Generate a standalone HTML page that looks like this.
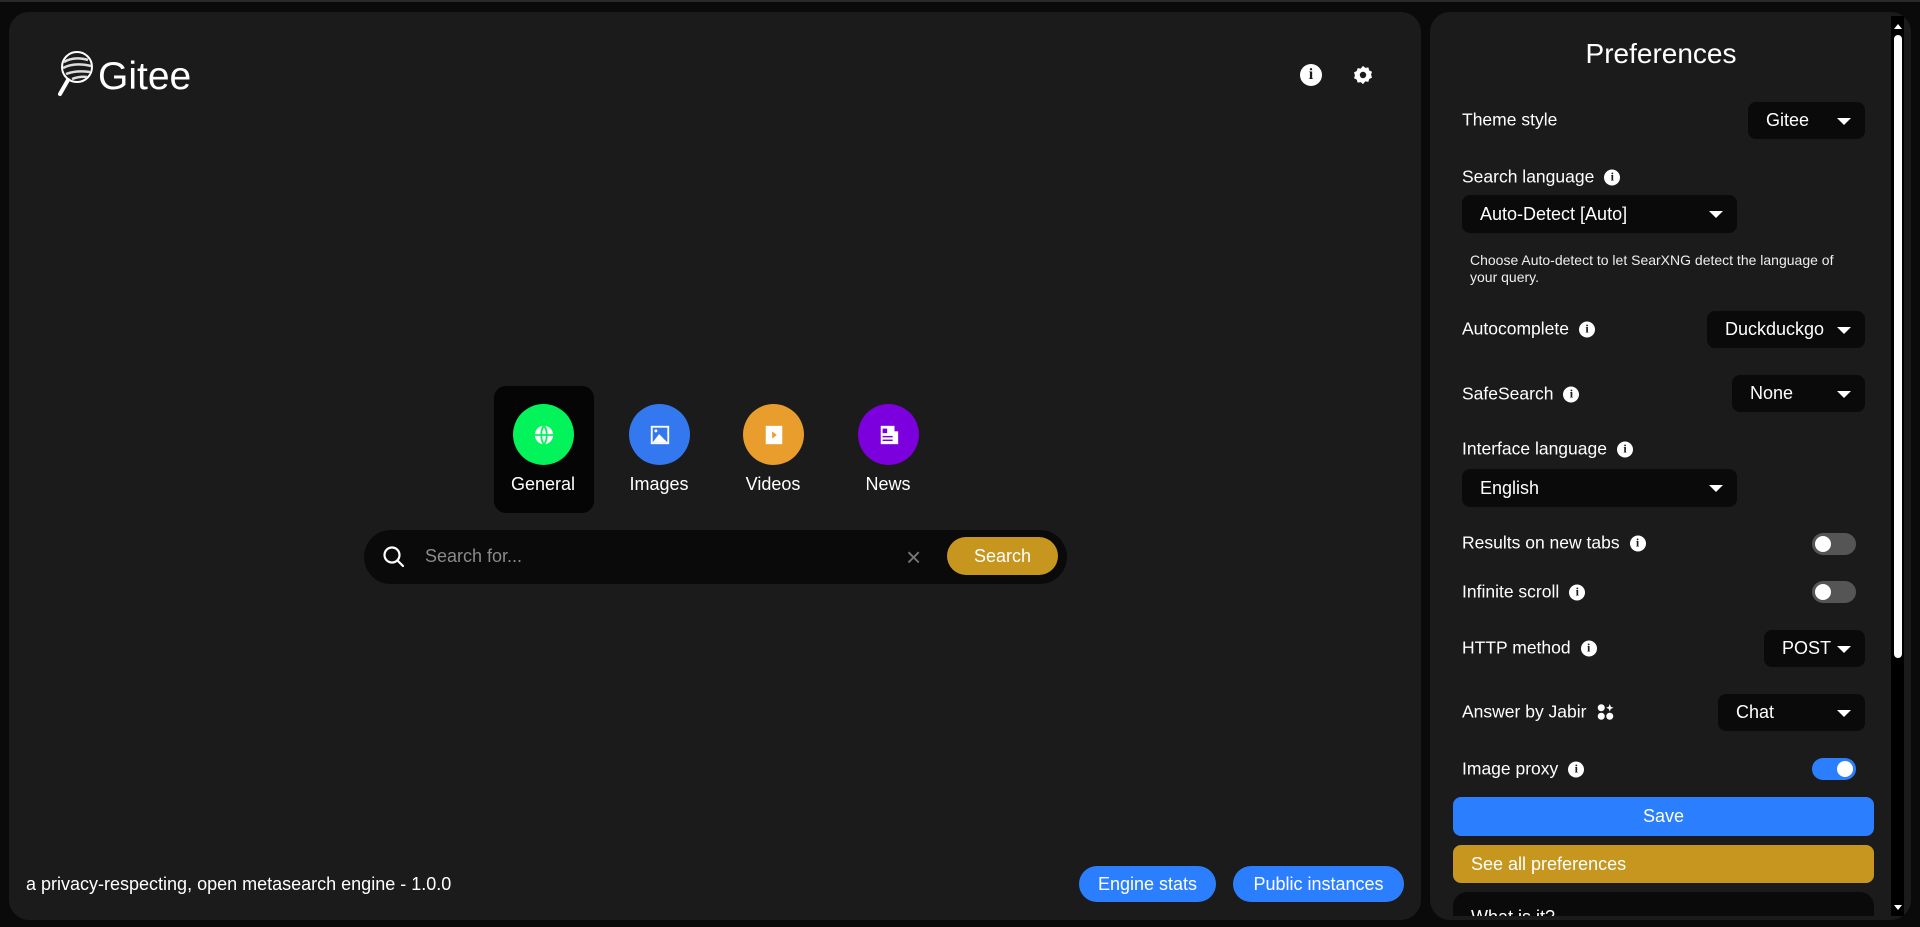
<!DOCTYPE html>
<html><head><meta charset="utf-8"><style>
*{box-sizing:border-box;margin:0;padding:0}
body{width:1920px;height:927px;background:#0a0a0a;font-family:"Liberation Sans",sans-serif;color:#fff;position:relative;overflow:hidden;border-top:2px solid #2a2a2a}
.a{position:absolute}
.panel{background:#1b1b1b;border-radius:20px}
.cat{position:absolute;top:402px;width:61px;height:61px;border-radius:50%;display:flex;align-items:center;justify-content:center}
.cl{position:absolute;top:472px;font-size:18px;width:110px;text-align:center}
.lbl{position:absolute;left:1462px;font-size:17.5px;display:flex;align-items:center;gap:10px;transform:translateY(-50%)}
.info{width:16px;height:16px;border-radius:50%;background:#fff;color:#1b1b1b;font-size:12px;font-weight:bold;font-family:"Liberation Serif",serif;display:inline-flex;align-items:center;justify-content:center}
.sel{position:absolute;background:#0a0a0a;border-radius:8px;font-size:18px;display:flex;align-items:center}
.sel:after{content:"";position:absolute;right:14px;top:50%;margin-top:-3px;border-left:7px solid transparent;border-right:7px solid transparent;border-top:7px solid #fff}
.tg{position:absolute;left:1812px;width:44px;height:22px;border-radius:11px;background:#555}
.tg:after{content:"";position:absolute;left:3px;top:3px;width:16px;height:16px;border-radius:50%;background:#fff}
.tg.on{background:#2b7fff}.tg.on:after{left:25px}
.btn{position:absolute;background:#2b7fff;border-radius:20px;font-size:18px;display:flex;align-items:center;justify-content:center}
</style></head><body>
<div class="a panel" style="left:9px;top:10px;width:1412px;height:908px"></div>
<div class="a panel" style="left:1430px;top:10px;width:481px;height:908px;overflow:hidden"></div>

<!-- logo -->
<svg class="a" style="left:54px;top:48px" width="40" height="50" viewBox="0 0 40 50">
<circle cx="23" cy="17" r="15" fill="none" stroke="#fff" stroke-width="2"/>
<path d="M10 12 Q20 6 34 10 M9 18 Q20 12 37 16 M12 24 Q22 20 36 22 M18 29 Q26 26 33 27" stroke="#ddd" stroke-width="2.5" fill="none"/>
<line x1="14" y1="30" x2="6" y2="44" stroke="#fff" stroke-width="4" stroke-linecap="round"/>
</svg>
<div class="a" style="left:98px;top:53px;font-size:39px">Gitee</div>

<!-- top icons -->
<div class="a info" style="left:1300px;top:62px;width:22px;height:22px;font-size:16px">i</div>
<svg class="a" style="left:1352px;top:62px" width="22" height="22" viewBox="0 0 24 24"><path fill="#fff" d="M12 2l2.5 2.2 3.3-.5 1 3.2 3 1.5-1 3.2 1 3.2-3 1.5-1 3.2-3.3-.5L12 22l-2.5-2.2-3.3.5-1-3.2-3-1.5 1-3.2-1-3.2 3-1.5 1-3.2 3.3.5z"/><circle cx="12" cy="12" r="3.5" fill="#1b1b1b"/></svg>

<!-- categories -->
<div class="a" style="left:494px;top:384px;width:100px;height:127px;background:#050505;border-radius:12px"></div>
<div class="cat" style="left:513px;background:#03f45a"><svg width="22" height="22" viewBox="0 0 24 24"><circle cx="12" cy="12" r="10" fill="#fff"/><path d="M2 12h20M12 2c-4 4-4 16 0 20M12 2c4 4 4 16 0 20" stroke="#03f45a" stroke-width="2" fill="none"/></svg></div>
<div class="cat" style="left:629px;background:#3478f0"><svg width="22" height="22" viewBox="0 0 24 24"><rect x="2" y="2" width="20" height="20" fill="#fff"/><rect x="4" y="4" width="16" height="16" fill="#3478f0"/><path d="M4 20l7-9 9 9z" fill="#fff"/><circle cx="7.5" cy="7.5" r="1.6" fill="#fff"/></svg></div>
<div class="cat" style="left:743px;background:#e89d2c"><svg width="22" height="22" viewBox="0 0 24 24"><rect x="3" y="2" width="18" height="20" fill="#fff"/><path d="M10 8l5 4-5 4z" fill="#e89d2c"/></svg></div>
<div class="cat" style="left:858px;background:#7b00dd"><svg width="22" height="22" viewBox="0 0 24 24"><rect x="3" y="2" width="15" height="20" fill="#fff"/><rect x="18" y="8" width="4" height="14" fill="#fff"/><rect x="5" y="5" width="5" height="5" fill="#7b00dd"/><rect x="5" y="13" width="11" height="1.6" fill="#7b00dd"/><rect x="5" y="17" width="11" height="1.6" fill="#7b00dd"/></svg></div>
<div class="cl" style="left:488px">General</div>
<div class="cl" style="left:604px">Images</div>
<div class="cl" style="left:718px">Videos</div>
<div class="cl" style="left:833px">News</div>

<!-- search -->
<div class="a" style="left:364px;top:528px;width:703px;height:54px;background:#0a0a0a;border-radius:27px"></div>
<svg class="a" style="left:382px;top:543px" width="24" height="24" viewBox="0 0 24 24"><circle cx="10" cy="10" r="7.5" stroke="#fff" stroke-width="2.2" fill="none"/><line x1="15.5" y1="15.5" x2="21" y2="21" stroke="#fff" stroke-width="2.2" stroke-linecap="round"/></svg>
<div class="a" style="left:425px;top:544px;font-size:18px;color:#8a8a8a">Search for...</div>
<div class="a" style="left:906px;top:540px;font-size:26px;color:#777">×</div>
<div class="a" style="left:947px;top:535px;width:111px;height:38px;background:#c7961f;border-radius:19px;font-size:18px;display:flex;align-items:center;justify-content:center">Search</div>

<!-- footer -->
<div class="a" style="left:26px;top:872px;font-size:18px">a privacy-respecting, open metasearch engine - 1.0.0</div>
<div class="btn" style="left:1079px;top:864px;width:137px;height:36px">Engine stats</div>
<div class="btn" style="left:1233px;top:864px;width:171px;height:36px">Public instances</div>

<!-- preferences -->
<div class="a" style="left:1430px;top:36px;width:462px;text-align:center;font-size:28px">Preferences</div>
<div class="lbl" style="top:118px">Theme style</div>
<div class="sel" style="left:1748px;top:100px;width:117px;height:37px;padding-left:18px">Gitee</div>
<div class="lbl" style="top:175px">Search language <span class="info">i</span></div>
<div class="sel" style="left:1462px;top:193px;width:275px;height:38px;padding-left:18px">Auto-Detect [Auto]</div>
<div class="a" style="left:1470px;top:250px;width:390px;font-size:14px;line-height:17px;color:#eee">Choose Auto-detect to let SearXNG detect the language of your query.</div>
<div class="lbl" style="top:327px">Autocomplete <span class="info">i</span></div>
<div class="sel" style="left:1707px;top:309px;width:158px;height:37px;padding-left:18px">Duckduckgo</div>
<div class="lbl" style="top:392px">SafeSearch <span class="info">i</span></div>
<div class="sel" style="left:1732px;top:373px;width:133px;height:37px;padding-left:18px">None</div>
<div class="lbl" style="top:447px">Interface language <span class="info">i</span></div>
<div class="sel" style="left:1462px;top:467px;width:275px;height:38px;padding-left:18px">English</div>
<div class="lbl" style="top:541px">Results on new tabs <span class="info">i</span></div>
<div class="tg" style="top:531px"></div>
<div class="lbl" style="top:590px">Infinite scroll <span class="info">i</span></div>
<div class="tg" style="top:579px"></div>
<div class="lbl" style="top:646px">HTTP method <span class="info">i</span></div>
<div class="sel" style="left:1764px;top:628px;width:101px;height:37px;padding-left:18px">POST</div>
<div class="lbl" style="top:710px">Answer by Jabir <svg width="17" height="17" viewBox="0 0 16 16" fill="#fff"><circle cx="4" cy="4" r="3.3"/><circle cx="4" cy="12" r="3.3"/><circle cx="12" cy="12" r="3.3"/><path d="M12 0.5l1 2.5 2.5 1-2.5 1-1 2.5-1-2.5-2.5-1 2.5-1z"/></svg></div>
<div class="sel" style="left:1718px;top:692px;width:147px;height:37px;padding-left:18px">Chat</div>
<div class="lbl" style="top:767px">Image proxy <span class="info">i</span></div>
<div class="tg on" style="top:756px"></div>
<div class="a" style="left:1453px;top:795px;width:421px;height:39px;background:#2b7fff;border-radius:8px;font-size:18px;display:flex;align-items:center;justify-content:center">Save</div>
<div class="a" style="left:1453px;top:843px;width:421px;height:38px;background:#c7961f;border-radius:8px;font-size:18px;display:flex;align-items:center;padding-left:18px">See all preferences</div>
<div class="a" style="left:1453px;top:890px;width:421px;height:24px;background:#0a0a0a;border-radius:14px 14px 0 0;overflow:hidden"><div style="position:absolute;left:18px;top:15px;font-size:18px">What is it?</div></div>

<!-- scrollbar -->
<div class="a" style="left:1891px;top:14px;width:13px;height:900px;background:#000"></div>
<div class="a" style="left:1894px;top:22px;border-left:4px solid transparent;border-right:4px solid transparent;border-bottom:5px solid #fff"></div>
<div class="a" style="left:1894px;top:33px;width:8px;height:623px;background:#fff;border-radius:4px"></div>
<div class="a" style="left:1894px;top:903px;border-left:4px solid transparent;border-right:4px solid transparent;border-top:5px solid #fff"></div>
</body></html>
